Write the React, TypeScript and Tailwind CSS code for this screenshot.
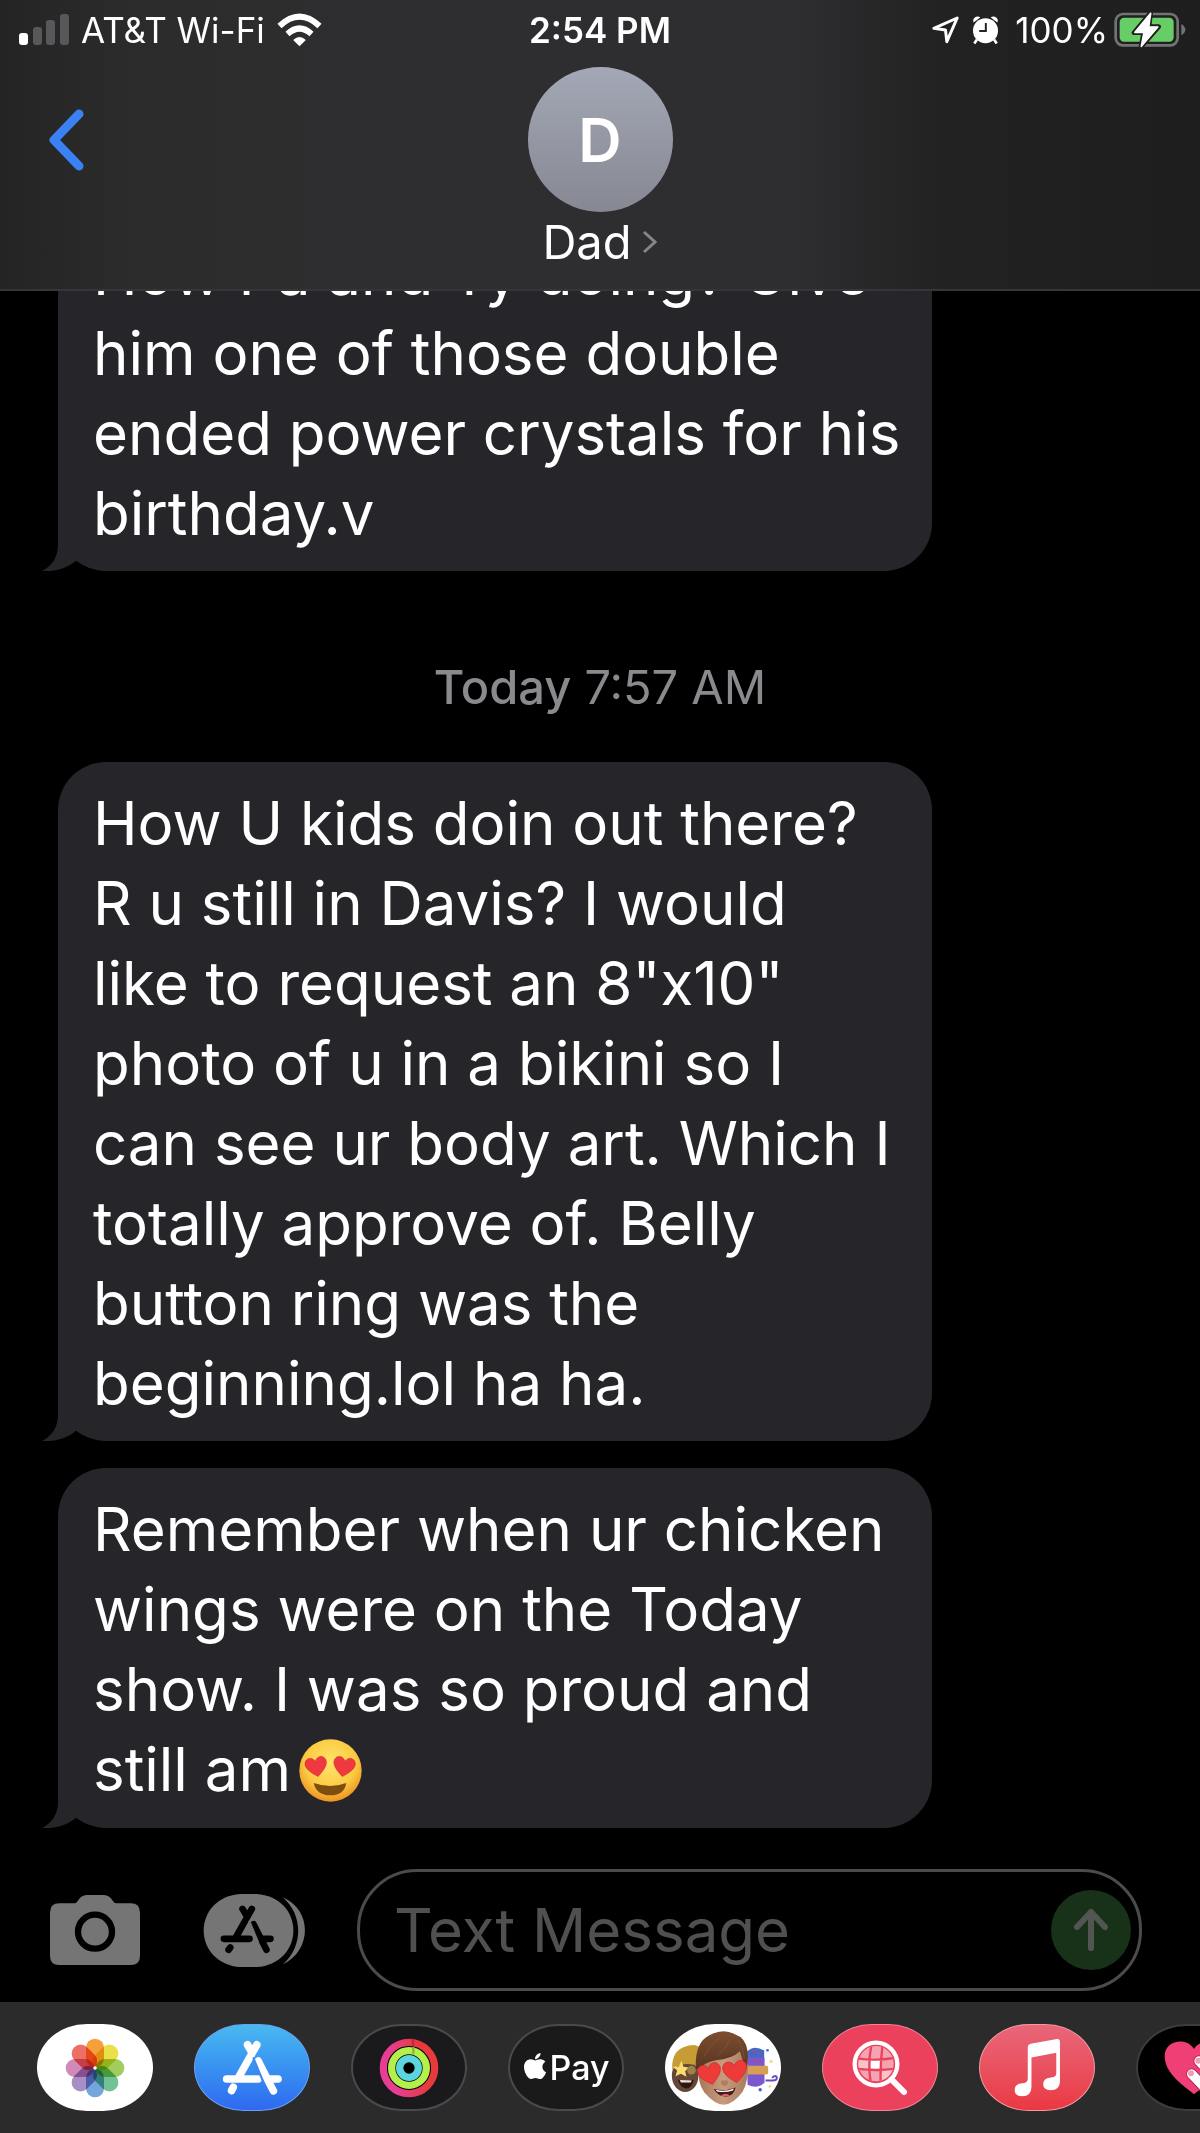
import React from "react";
import { FaApple } from "react-icons/fa";

type Message = { id: number; text: string; emoji?: boolean };

const earlier: Message[] = [
  { id: 1, text: "How Pa and Ty doing? Give\nhim one of those double\nended power crystals for his\nbirthday.v" },
];

const today: Message[] = [
  {
    id: 2,
    text: 'How U kids doin out there?\nR u still in Davis? I would\nlike to request an 8"x10"\nphoto of u in a bikini so I\ncan see ur body art. Which I\ntotally approve of. Belly\nbutton ring was the\nbeginning.lol ha ha.',
  },
  {
    id: 3,
    text: "Remember when ur chicken\nwings were on the Today\nshow. I was so proud and\nstill am",
    emoji: true,
  },
];

const HEART = "M0 30 C-12 20 -34 4 -34 -13 C-34 -34 -8 -38 0 -18 C8 -38 34 -34 34 -13 C34 4 12 20 0 30 Z";

function SignalBars() {
  return (
    <svg viewBox="0 0 50 32" className="h-8 w-[50px]" aria-label="Signal strength">
      <rect x="0" y="19" width="9" height="12" rx="3" fill="#fff" />
      <rect x="14" y="13" width="9" height="18" rx="3" fill="#58585a" />
      <rect x="27" y="6" width="9" height="25" rx="3" fill="#58585a" />
      <rect x="41" y="0" width="9" height="31" rx="3" fill="#58585a" />
    </svg>
  );
}

function WifiIcon() {
  return (
    <svg viewBox="826 34 134 102" className="h-[34px] w-[45px]" aria-label="Wi-Fi">
      <g fill="none" stroke="#fff" strokeWidth="18">
        <path d="M833 73 Q893 17 953 73" />
        <path d="M857 97 Q893 64 929 97" />
      </g>
      <path d="M874 115 Q893 97 912 115 L893 134 Z" fill="#fff" />
    </svg>
  );
}

function LocationIcon() {
  return (
    <svg viewBox="396 44 86 90" className="h-[30px] w-[29px]" aria-label="Location">
      <path d="M404 84 L474 53 L443 124 L439 89 Z" fill="none" stroke="#fff" strokeWidth="9" strokeLinejoin="round" />
    </svg>
  );
}

function AlarmIcon() {
  return (
    <svg viewBox="522 44 82 90" className="h-[30px] w-[27px]" aria-label="Alarm">
      <path d="M537 118 L529 130 M589 118 L597 130" stroke="#fff" strokeWidth="8" />
      <circle cx="563" cy="91" r="38" fill="#fff" />
      <path d="M527 66 Q522 56 534 49 Q542 46 547 51 Z M599 66 Q604 56 592 49 Q584 46 579 51 Z" fill="#fff" />
      <path d="M564 68 V92 H544" fill="none" stroke="#222" strokeWidth="6" />
    </svg>
  );
}

function BatteryIcon() {
  return (
    <svg viewBox="940 34 216 108" className="h-9 w-[72px]" aria-label="Battery charging">
      <rect x="945" y="40" width="186" height="94" rx="22" fill="none" stroke="#737375" strokeWidth="8" />
      <rect x="957" y="51" width="162" height="72" rx="13" fill="#67ce67" />
      <path d="M1142 70 Q1154 78 1154 87 Q1154 96 1142 104 Z" fill="#737375" />
      <path
        d="M1050 36 L1000 96 H1029 L1021 139 L1074 78 H1045 Z"
        fill="#fff"
        stroke="#202020"
        strokeWidth="14"
        strokeLinejoin="round"
        paintOrder="stroke"
      />
      <path d="M1050 38 L1003 95 H1030 L1022 137 L1071 79 H1044 Z" fill="#fff" stroke="#fff" strokeWidth="5" strokeLinejoin="round" />
    </svg>
  );
}

function Header() {
  return (
    <header className="shrink-0 border-b-2 border-[#363638] bg-[linear-gradient(90deg,#242424_0%,#2b2b2b_10%,#2e2e30_30%,#2e2e30_66%,#222223_78%,#1e1e1e_100%)]">
      <div className="grid h-[60px] grid-cols-[1fr_auto_1fr] items-center px-[14px] text-[35px] leading-[40px]">
        <div className="flex items-center gap-3 pl-[5px]">
          <SignalBars />
          <span>AT&amp;T Wi-Fi</span>
          <WifiIcon />
        </div>
        <time className="font-semibold">2:54 PM</time>
        <div className="flex items-center justify-end">
          <LocationIcon />
          <span className="mr-4 ml-3">
            <AlarmIcon />
          </span>
          <span className="mr-[6px]">100%</span>
          <BatteryIcon />
        </div>
      </div>
      <div className="grid grid-cols-[1fr_auto_1fr] items-start pt-[7px] pb-[17px]">
        <button type="button" aria-label="Back" className="mt-[39px] ml-[46px] w-fit">
          <svg viewBox="0 0 40 68" className="h-[68px] w-10">
            <path d="M33 8 L8 34 L33 60" fill="none" stroke="#3a82f4" strokeWidth="9" strokeLinecap="round" strokeLinejoin="round" />
          </svg>
        </button>
        <button type="button" className="flex flex-col items-center">
          <span className="flex size-[145px] items-center justify-center rounded-full bg-linear-to-b from-[#a4a8b6] to-[#868892] text-[60px] leading-[80px] font-semibold">
            D
          </span>
          <span className="flex h-[60px] items-center gap-[10px] text-[47px] leading-[60px]">
            Dad
            <svg viewBox="0 0 16 26" className="h-[26px] w-4">
              <path d="M2 3 L13 13 L2 23" fill="none" stroke="#86868a" strokeWidth="3" />
            </svg>
          </span>
        </button>
      </div>
    </header>
  );
}

function HeartEyes() {
  return (
    <svg viewBox="-94 -94 188 188" className="mb-2 ml-2 inline-block size-[63px] align-middle" role="img" aria-label="Smiling face with heart eyes">
      <defs>
        <radialGradient id="face" cx="0.5" cy="0.38" r="0.62">
          <stop offset="0" stopColor="#ffe46c" />
          <stop offset="0.65" stopColor="#fccb43" />
          <stop offset="1" stopColor="#ec9322" />
        </radialGradient>
      </defs>
      <circle r="93" fill="url(#face)" />
      <path d="M-50 37 Q0 55 47 37 Q42 73 0 74 Q-43 73 -50 37 Z" fill="#7e4d10" />
      <g fill="#f0393e" stroke="#d42a30" strokeWidth="2">
        <path d={HEART} transform="translate(-42 -10) rotate(-10) scale(0.94)" />
        <path d={HEART} transform="translate(40 -10) rotate(10) scale(0.94)" />
      </g>
    </svg>
  );
}

function Bubble({ message }: { message: Message }) {
  return (
    <li className="relative w-full max-w-[874px] rounded-[48px] bg-[#26252a] pt-[21px] pr-6 pb-[18px] pl-[35px] text-[60px] leading-[80px] whitespace-pre-line">
      {message.text}
      {message.emoji && <HeartEyes />}
      <svg viewBox="0 0 46 60" className="absolute bottom-0 -left-4 h-[60px] w-[46px]" aria-hidden="true">
        <path d="M16 0 V34 C16 46 10 55 0 60 C14 61 26 57 35 49 L45 30 L17 0 Z" fill="#26252a" />
      </svg>
    </li>
  );
}

function CameraIcon() {
  return (
    <svg viewBox="150 585 270 210" className="h-[70px] w-[90px]">
      <path
        d="M178 610 H222 Q230 610 235 601 Q243 586 260 585 H312 Q328 586 337 601 Q342 610 350 610 H392 Q420 610 420 638 V768 Q420 795 392 795 H178 Q150 795 150 768 V638 Q150 610 178 610 Z"
        fill="#757575"
      />
      <circle cx="285" cy="695" r="51" fill="none" stroke="#000" strokeWidth="19" />
    </svg>
  );
}

function StoreDrawerIcon() {
  return (
    <svg viewBox="610 578 310 224" className="h-[75px] w-[103px]">
      <path d="M722 580 H772 C838 584 882 632 882 690 C882 748 838 796 772 800 H722 C656 796 612 748 612 690 C612 632 656 584 722 580 Z" fill="#757575" />
      <path d="M850 590 C940 628 938 752 850 792 C912 740 912 642 850 590 Z" fill="#757575" />
      <g stroke="#000" strokeWidth="20" strokeLinecap="round" fill="none">
        <path d="M757 625 L708 712 M729 625 L742 647 M673 715 H750 M762 671 L801 748 M791 715 H813 M692 741 L687 748" />
      </g>
      <path d="M749 660 L776 726" stroke="#757575" strokeWidth="6" />
    </svg>
  );
}

function Composer() {
  return (
    <form className="flex shrink-0 items-center pt-[41px] pr-[58px] pb-[11px] pl-[50px]" onSubmit={(e) => e.preventDefault()}>
      <button type="button" aria-label="Camera">
        <CameraIcon />
      </button>
      <button type="button" aria-label="Apps" className="ml-[63px]">
        <StoreDrawerIcon />
      </button>
      <div className="ml-[51px] flex h-[122px] min-w-0 flex-1 items-center rounded-[60px] border-3 border-[#4b4b4b] pr-2 pl-[34px]">
        <input
          type="text"
          aria-label="Text Message"
          placeholder="Text Message"
          className="h-20 min-w-0 flex-1 bg-transparent text-[60px] leading-[80px] outline-none placeholder:text-[#505052]"
        />
        <button type="submit" aria-label="Send" className="flex size-20 items-center justify-center rounded-full bg-[#183119]">
          <svg viewBox="0 0 36 44" className="h-11 w-9">
            <path d="M18 40 V4 M4 19 L18 4 L32 19" fill="none" stroke="#535553" strokeWidth="6" strokeLinecap="round" strokeLinejoin="round" />
          </svg>
        </button>
      </div>
    </form>
  );
}

const petals = [
  { angle: 0, color: "#f5a03c" },
  { angle: 45, color: "#ece04a" },
  { angle: 90, color: "#a3cc60" },
  { angle: 135, color: "#72c296" },
  { angle: 180, color: "#75a5da" },
  { angle: 225, color: "#a78fc6" },
  { angle: 270, color: "#d08bb8" },
  { angle: 315, color: "#ef6f67" },
];

function PhotosIcon() {
  return (
    <svg viewBox="-90 -90 180 180" className="size-[60px]">
      {petals.map((p) => (
        <rect key={p.angle} x="-27" y="-88" width="54" height="86" rx="27" fill={p.color} transform={`rotate(${p.angle})`} className="mix-blend-multiply" />
      ))}
      <circle r="5" fill="#fff" />
    </svg>
  );
}

function AppStoreIcon() {
  return (
    <svg viewBox="666 1014 184 168" className="h-14 w-[61px]">
      <g stroke="#fff" strokeWidth="23" strokeLinecap="round" fill="none">
        <path d="M771 1028 L716 1126 M743 1028 L757 1052 M680 1131 H775 M775 1077 L821 1167 M811 1131 H835 M700 1156 L695 1166" />
      </g>
      <path d="M760 1066 L792 1144" stroke="#3f86f3" strokeWidth="6" />
    </svg>
  );
}

function RingsIcon() {
  return (
    <svg viewBox="-90 -90 180 180" className="size-[60px]">
      <defs>
        <linearGradient id="move" x1="0" x2="1" y1="0.6" y2="0.4">
          <stop offset="0.2" stopColor="#e63e92" />
          <stop offset="0.8" stopColor="#e63a3c" />
        </linearGradient>
      </defs>
      <circle r="88" fill="#000" />
      <g fill="none" strokeWidth="22">
        <circle r="77" stroke="url(#move)" />
        <circle r="52" stroke="#b4f04c" />
        <circle r="28" stroke="#5bd5e0" />
        <path d="M12 -88 V-66" stroke="#b92c3c" strokeWidth="7" />
        <path d="M13 -63 V-41" stroke="#84b83c" strokeWidth="7" />
      </g>
    </svg>
  );
}

function MemojiIcon() {
  return (
    <svg viewBox="72 42 348 262" className="h-[87px] w-[116px]">
      <defs>
        <linearGradient id="skin" x1="0" x2="1" y1="0" y2="0">
          <stop offset="0" stopColor="#a57658" />
          <stop offset="0.5" stopColor="#c99b7e" />
          <stop offset="1" stopColor="#a87b5f" />
        </linearGradient>
        <linearGradient id="hair" x1="0" x2="0" y1="0" y2="1">
          <stop offset="0" stopColor="#7d4e31" />
          <stop offset="1" stopColor="#583420" />
        </linearGradient>
      </defs>
      <ellipse cx="132" cy="198" rx="40" ry="49" fill="#644736" />
      <path d="M93 180 Q88 108 160 105 L180 112 V172 Q130 150 93 180 Z" fill="#c79c35" />
      <path d="M110 209 Q135 220 158 209 Q153 236 135 236 Q116 232 110 209 Z" fill="#2b1714" />
      <path d="M116 211 L152 212 L149 218 H119 Z" fill="#eee3d6" />
      <path d="M121 153 L127 171 L143 173 L132 184 L136 201 L119 192 L103 199 L108 182 L95 171 L113 170 Z" fill="#f8dc70" />
      <circle cx="151" cy="181" r="13" fill="#9f8148" />
      <path d="M318 125 Q340 103 370 122 V170 H318 Z" fill="#4468c4" />
      <path d="M318 143 H371 V218 Q350 240 320 225 Z" fill="#7b58cf" />
      <rect x="318" y="168" width="64" height="26" rx="5" fill="#d6a050" />
      <path d="M374 212 H396 Q410 212 408 202 Q402 195 394 204" fill="none" stroke="#6c4bc0" strokeWidth="6" />
      <path d="M332 120 L358 132 M330 150 L362 158" stroke="#b9457f" strokeWidth="3" />
      <circle cx="380" cy="121" r="4" fill="#4161c9" />
      <circle cx="358" cy="240" r="5" fill="#4161c9" />
      <circle cx="391" cy="155" r="5" fill="#f0de8a" />
      <circle cx="387" cy="230" r="4" fill="#f0d884" />
      <path d="M172 160 Q168 220 190 248 Q222 285 248 285 Q276 285 305 246 Q324 215 320 150 L285 105 H195 Z" fill="url(#skin)" />
      <path d="M164 178 Q160 98 205 76 Q245 54 280 72 Q316 84 320 124 Q323 156 315 176 Q304 150 297 124 Q272 148 224 151 Q186 158 176 178 Z" fill="url(#hair)" />
      <path d="M190 138 Q208 100 240 82 M228 138 Q254 118 266 88 M290 90 Q306 108 310 144" fill="none" stroke="#8a5a3a" strokeWidth="2" strokeLinecap="round" />
      <path d="M240 212 Q238 226 250 229 Q264 227 260 212" fill="#ad7e62" />
      <path d="M218 238 Q250 246 284 233 Q278 260 254 261 Q231 260 218 238 Z" fill="#4a1918" />
      <path d="M224 240 Q252 247 279 236 L276 242 Q252 250 228 245 Z" fill="#fff" />
      <path d="M240 257 Q254 247 267 257 Q254 264 240 257 Z" fill="#d9636a" />
      <g fill="#ee3b39" stroke="#cf2b2c" strokeWidth="2">
        <path d={HEART} transform="translate(207 194) rotate(-14) scale(1.02)" />
        <path d={HEART} transform="translate(283 187) rotate(-8) scale(1.06)" />
      </g>
    </svg>
  );
}

function ImageSearchIcon() {
  return (
    <svg viewBox="148 598 168 168" className="size-14">
      <defs>
        <clipPath id="lens">
          <circle cx="220" cy="669" r="53" />
        </clipPath>
      </defs>
      <g clipPath="url(#lens)">
        <rect x="160" y="610" width="120" height="120" fill="#f5a3b1" />
        <rect x="203" y="654" width="32" height="32" fill="#fff" />
        <rect x="160" y="654" width="40" height="32" fill="#f8c3cb" />
        <rect x="235" y="686" width="40" height="40" fill="#f8c3cb" />
        <path d="M207 610 Q194 669 205 730 M240 610 Q232 669 234 730 M160 653 Q220 662 280 651 M160 684 Q220 692 280 684" fill="none" stroke="#ec415d" strokeWidth="7" />
      </g>
      <circle cx="220" cy="670" r="64" fill="none" stroke="#fff" strokeWidth="13" />
      <path d="M267 717 L304 754" stroke="#fff" strokeWidth="18" strokeLinecap="round" />
    </svg>
  );
}

function MusicIcon() {
  return (
    <svg viewBox="624 594 140 176" className="h-[59px] w-[47px]">
      <path
        d="M665 622 Q665 613 674 611 L752 597 Q761 596 761 605 V723 Q761 750 733 750 Q711 749 711 733 Q711 714 733 712 Q750 711 750 700 V638 L676 652 V740 Q676 767 648 768 Q626 767 626 750 Q626 731 648 729 Q665 728 665 716 Z"
        fill="#fff"
      />
    </svg>
  );
}

function HeartHandIcon() {
  return (
    <svg viewBox="1085 610 180 162" className="h-[54px] w-[60px]">
      <path d="M1175 770 C1150 748 1087 710 1087 656 C1087 606 1154 598 1175 634 C1196 598 1263 606 1263 656 C1263 710 1200 748 1175 770 Z" fill="#ef3f74" />
      <g stroke="#b42a58" strokeWidth="34" strokeLinecap="round">
        <path d="M1168 709 L1205 748 M1190 670 L1240 722" />
      </g>
      <g stroke="#fff" strokeWidth="28" strokeLinecap="round">
        <path d="M1168 709 L1205 748 M1190 670 L1240 722" />
      </g>
      <circle cx="1166" cy="707" r="9" fill="#f29bb4" />
      <circle cx="1188" cy="669" r="9" fill="#f29bb4" />
    </svg>
  );
}

const pill = "flex h-[87px] w-[116px] shrink-0 items-center justify-center overflow-hidden rounded-[50px/50%]";

function AppStrip() {
  return (
    <nav aria-label="Message apps" className="flex h-[131px] shrink-0 items-center gap-[41px] overflow-hidden bg-[#2b2b2b] px-[37px]">
      <button type="button" aria-label="Photos" className={`${pill} bg-white`}>
        <PhotosIcon />
      </button>
      <button type="button" aria-label="App Store" className={`${pill} border border-[#6b9ff0] bg-linear-to-b from-[#4ab8f0] to-[#3068f0]`}>
        <AppStoreIcon />
      </button>
      <button type="button" aria-label="Activity" className={`${pill} border-2 border-[#4a4a4c] bg-[#1a1a1d]`}>
        <RingsIcon />
      </button>
      <button type="button" aria-label="Apple Pay" className={`${pill} gap-[3px] border-2 border-[#4a4a4c] bg-[#1b1a1b]`}>
        <FaApple className="mb-[3px] h-[30px] w-6" />
        <span className="text-[34px] leading-10 font-medium">Pay</span>
      </button>
      <button type="button" aria-label="Memoji stickers" className={`${pill} bg-white`}>
        <MemojiIcon />
      </button>
      <button type="button" aria-label="Image search" className={`${pill} border border-[#ef8496] bg-[#ec415d]`}>
        <ImageSearchIcon />
      </button>
      <button type="button" aria-label="Music" className={`${pill} border border-[#f09aa2] bg-linear-to-b from-[#e8667a] to-[#ea3742]`}>
        <MusicIcon />
      </button>
      <button type="button" aria-label="Digital Touch" className={`${pill} border-2 border-[#3c3c3e] bg-black`}>
        <HeartHandIcon />
      </button>
    </nav>
  );
}

export default function App() {
  return (
    <div className="flex h-screen flex-col bg-black font-['Inter',sans-serif] text-white">
      <Header />
      <main className="flex min-h-0 flex-1 flex-col justify-end overflow-hidden px-[58px]">
        <ul>
          {earlier.map((m) => (
            <Bubble key={m.id} message={m} />
          ))}
        </ul>
        <p className="flex h-[191px] shrink-0 items-center justify-center pt-[42px] text-[47px] leading-[60px] text-[#8a8a8e]">
          <span>
            <span className="font-medium">Today</span> 7:57 AM
          </span>
        </p>
        <ul className="flex flex-col gap-[27px]">
          {today.map((m) => (
            <Bubble key={m.id} message={m} />
          ))}
        </ul>
      </main>
      <Composer />
      <AppStrip />
    </div>
  );
}
